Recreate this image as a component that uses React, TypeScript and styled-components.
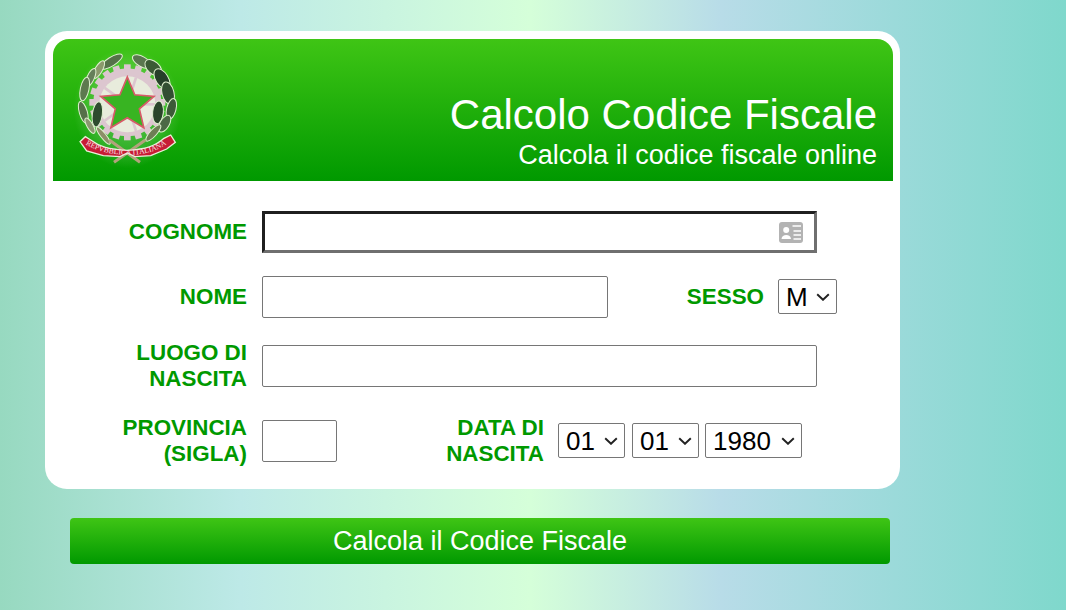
import React from "react";
import styled, { createGlobalStyle } from "styled-components";

const Global = createGlobalStyle`
  html, body { margin: 0; padding: 0; height: 610px; overflow: hidden; }
  body {
    font-family: "Liberation Sans", Arial, sans-serif;
    background: linear-gradient(90deg, #97d9c0 0px, #bde9e7 240px, #d5ffd9 530px, #b8dce8 720px, #7fd8cc 1066px);
  }
`;
const Page = styled.main`
  width: 855px;
  padding: 31px 0 0 45px;
`;
const Card = styled.section`
  background: #fff;
  border-radius: 22px;
  padding: 8px 7px 0 8px;
  height: 458px;
  box-sizing: border-box;
`;
const Header = styled.header`
  height: 142px;
  border-radius: 16px 16px 0 0;
  background: linear-gradient(180deg, #3fc515, #009900);
  display: flex;
  justify-content: space-between;
  padding: 11px 16px 0 19px;
  box-sizing: border-box;
  color: #fff;
`;
const Titles = styled.div`
  text-align: right;
  padding-top: 42px;
`;
const Title = styled.h1`
  margin: 0;
  font-weight: 400;
  font-size: 42px;
  line-height: 46px;
`;
const Subtitle = styled.p`
  margin: 1px 0 0;
  font-size: 27px;
  line-height: 32px;
`;
const Form = styled.form`
  display: flex;
  flex-direction: column;
  padding-top: 30px;
`;
const Row = styled.div<{ $mt: number }>`
  display: flex;
  align-items: center;
  margin-top: ${(p) => p.$mt}px;
`;
const Label = styled.label<{ $w?: number; $ml?: number; $mr?: number }>`
  width: ${(p) => p.$w ?? 194}px;
  margin-left: ${(p) => p.$ml ?? 0}px;
  margin-right: ${(p) => p.$mr ?? 15}px;
  flex: none;
  text-align: right;
  color: #009900;
  font-weight: 700;
  font-size: 22.4px;
  line-height: 26px;
`;
const Field = styled.div`
  position: relative;
  width: 555px;
  height: 42px;
`;
const Input = styled.input<{ $w: number; $focus?: boolean }>`
  display: block;
  box-sizing: border-box;
  width: ${(p) => p.$w}px;
  height: 42px;
  padding: 0 8px;
  background: #fff;
  font: 24px "Liberation Sans", Arial, sans-serif;
  border-radius: ${(p) => (p.$focus ? 0 : 2)}px;
  outline: none;
  border: ${(p) => (p.$focus ? "3px solid" : "1px solid #767676")};
  ${(p) => p.$focus && "border-color: #1f1f1f #6f6f6f #6f6f6f #1f1f1f;"}
`;
const CardIcon = styled.svg`
  position: absolute;
  right: 14px;
  top: 11px;
  width: 24px;
  height: 21px;
`;
const SelectWrap = styled.div<{ $w: number; $ml?: number }>`
  position: relative;
  flex: none;
  width: ${(p) => p.$w}px;
  height: 35px;
  margin: 0 0 1px ${(p) => p.$ml ?? 0}px;
`;
const Select = styled.select`
  appearance: none;
  display: block;
  box-sizing: border-box;
  width: 100%;
  height: 100%;
  background: #fff;
  color: #000;
  border: 1px solid #767676;
  border-radius: 2px;
  padding: 0 0 0 7px;
  font: 26px "Liberation Sans", Arial, sans-serif;
`;
const Chevron = styled.svg`
  position: absolute;
  right: 7px;
  top: 14px;
  width: 14px;
  height: 8px;
  pointer-events: none;
`;
const Submit = styled.button`
  display: block;
  width: 820px;
  height: 46px;
  margin: 29px 0 0 25px;
  border: 0;
  border-radius: 4px;
  background: linear-gradient(180deg, #3fc515, #009900);
  color: #fff;
  font: 27px "Liberation Sans", Arial, sans-serif;
`;

type L = [number, number, number, string, number, number];
const leaves: L[] = [
  [214, 110, 58, "#55724a", 38, 13],
  [176, 134, 30, "#8b9a6c", 30, 11],
  [152, 158, 24, "#66805a", 30, 11],
  [134, 192, 12, "#5d7a50", 36, 13],
  [130, 262, -16, "#56704a", 34, 12],
  [150, 302, -30, "#8a9670", 26, 9],
  [172, 268, 8, "#2f4c2e", 38, 15],
  [190, 332, -38, "#8d8f68", 32, 8],
  [306, 110, -60, "#5a7750", 32, 15],
  [340, 128, -48, "#3a5a36", 30, 18],
  [366, 162, -32, "#26412a", 34, 19],
  [384, 204, -14, "#324f30", 34, 18],
  [394, 252, 14, "#3c5a38", 32, 14],
  [354, 262, 6, "#2a452b", 34, 16],
  [374, 296, 30, "#4b6844", 28, 14],
  [340, 324, 42, "#6d7e54", 32, 10],
];

const Emblem = () => {
  const teeth = Array.from({ length: 20 }, (_, i) => i * 18);
  const star = Array.from({ length: 10 }, (_, i) => {
    const r = i % 2 ? 38 : 84;
    const a = (-90 + i * 36) * (Math.PI / 180);
    return `${(262 + r * Math.cos(a)).toFixed(1)},${(240 + r * Math.sin(a)).toFixed(1)}`;
  }).join(" ");
  const spokes = [18, 90, 162, 234, 306];
  return (
    <svg width="108" height="120" viewBox="96 75 324 360" aria-hidden="true">
      <defs>
        <radialGradient id="glow" cx="50%" cy="50%" r="50%">
          <stop offset="0%" stopColor="#ffffff" stopOpacity="0.3" />
          <stop offset="72%" stopColor="#ffffff" stopOpacity="0.14" />
          <stop offset="100%" stopColor="#ffffff" stopOpacity="0" />
        </radialGradient>
        <filter id="soft" x="-5%" y="-5%" width="110%" height="110%">
          <feGaussianBlur stdDeviation="1.8" />
        </filter>
      </defs>
      <ellipse cx="262" cy="250" rx="162" ry="180" fill="url(#glow)" />
      <g filter="url(#soft)">
        {teeth.map((a) => (
          <rect key={a} x="252" y="118" width="20" height="18" fill="#dcc6cf" transform={`rotate(${a} 262 232)`} />
        ))}
        <circle cx="262" cy="232" r="102" fill="#dcc6cf" />
        <circle cx="262" cy="238" r="84" fill="#e8ecdc" />
        {spokes.map((a) => (
          <rect key={a} x="258" y="154" width="8" height="50" fill="#dcc6cf" transform={`rotate(${a} 262 238)`} />
        ))}
        <polygon points={star} fill="#38b422" stroke="#d85a68" strokeWidth="5" strokeLinejoin="miter" />
        {leaves.map(([x, y, r, c, l, w]) => (
          <ellipse
            key={`${x}-${y}`}
            cx={x}
            cy={y}
            rx={w}
            ry={l}
            fill={c}
            stroke="#dff0cf"
            strokeWidth="3"
            transform={`rotate(${r} ${x} ${y})`}
          />
        ))}
        <path d="M208 345 L300 412 M316 345 L222 412" stroke="#b3a27c" strokeWidth="9" />
        <path
          d="M120 350 L136 335 L152 345 C180 366 205 372 262 376 C318 372 345 364 372 340 L392 330 L406 352 L380 372 L332 392 L285 395 L262 384 L240 395 L190 392 L140 378 Z"
          fill="#c71c34"
          stroke="#e8f0d8"
          strokeWidth="4"
        />
      </g>
      <path id="ribbonText" d="M132 354 C170 382 220 388 262 390 C305 388 352 384 396 344" fill="none" />
      <text fontFamily="'Liberation Serif', serif" fontSize="23" fill="#f8e3e6">
        <textPath href="#ribbonText" startOffset="2%">REPVBBLICA ITALIANA</textPath>
      </text>
    </svg>
  );
};

const Pick = ({ w, ml, options }: { w: number; ml?: number; options: string[] }) => (
  <SelectWrap $w={w} $ml={ml}>
    <Select>
      {options.map((o) => (
        <option key={o}>{o}</option>
      ))}
    </Select>
    <Chevron viewBox="0 0 14 8" aria-hidden="true">
      <path d="M1.2 1.2 L7 6.8 L12.8 1.2" fill="none" stroke="#222" strokeWidth="1.9" />
    </Chevron>
  </SelectWrap>
);

export default function App() {
  return (
    <Page>
      <Global />
      <Card>
        <Header>
          <Emblem />
          <Titles>
            <Title>Calcolo Codice Fiscale</Title>
            <Subtitle>Calcola il codice fiscale online</Subtitle>
          </Titles>
        </Header>
        <Form>
          <Row $mt={0}>
            <Label>COGNOME</Label>
            <Field>
              <Input $w={555} $focus />
              <CardIcon viewBox="0 0 24 21" aria-hidden="true">
                <rect width="24" height="21" rx="3" fill="#b3b3b3" />
                <circle cx="7.2" cy="8" r="3" fill="#fff" />
                <path d="M2.5 17 C2.5 11.8 12 11.8 12 17 Z" fill="#fff" />
                <path d="M13.5 4 H22 M14.5 9 H22 M14.5 13 H22 M14.5 17 H22" stroke="#fff" strokeWidth="1.5" />
              </CardIcon>
            </Field>
          </Row>
          <Row $mt={23}>
            <Label>NOME</Label>
            <Input $w={346} />
            <Label $w={86} $ml={70} $mr={14}>SESSO</Label>
            <Pick w={59} options={["M", "F"]} />
          </Row>
          <Row $mt={22}>
            <Label>LUOGO DI NASCITA</Label>
            <Input $w={555} />
          </Row>
          <Row $mt={33 - 10}>
            <Label>PROVINCIA (SIGLA)</Label>
            <Input $w={75} />
            <Label $w={100} $ml={107} $mr={14}>DATA DI NASCITA</Label>
            <Pick w={67} options={["01"]} />
            <Pick w={67} ml={7} options={["01"]} />
            <Pick w={97} ml={6} options={["1980"]} />
          </Row>
        </Form>
      </Card>
      <Submit type="button">Calcola il Codice Fiscale</Submit>
    </Page>
  );
}
